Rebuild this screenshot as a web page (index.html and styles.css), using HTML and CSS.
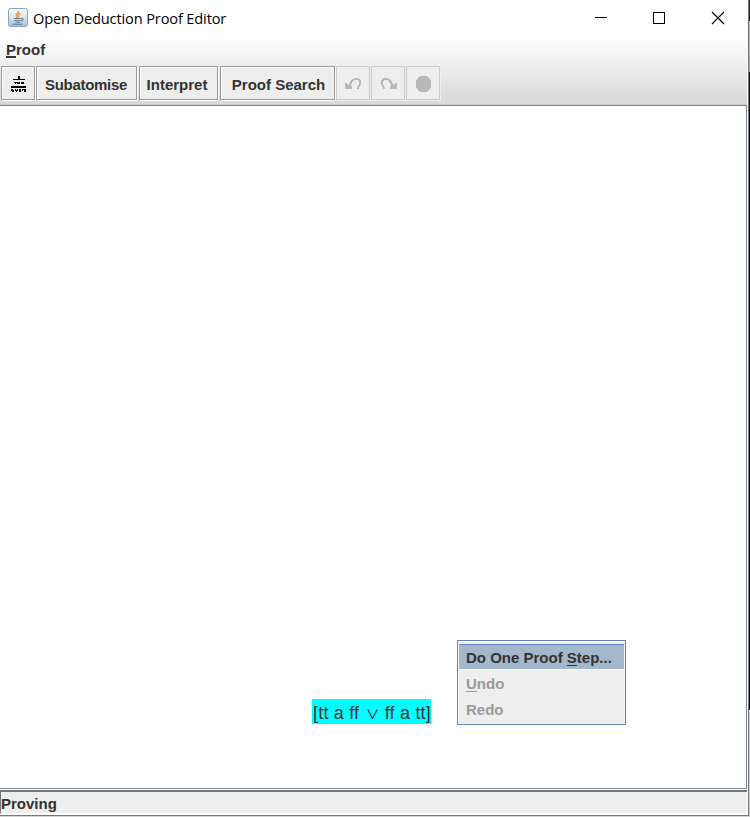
FILE: index.html
```html
<!DOCTYPE html>
<html lang="en">
<head>
<meta charset="utf-8">
<title>Open Deduction Proof Editor</title>
<link rel="stylesheet" href="styles.css">
</head>
<body>
<div class="screen">
<div class="window">
  <header class="titlebar">
    <svg class="app-icon" width="20" height="20" viewBox="0 0 20 20">
      <defs><linearGradient id="g" x1="0" y1="0" x2="0" y2="1"><stop offset="0" stop-color="#f8fafb"/><stop offset=".5" stop-color="#dde5eb"/><stop offset="1" stop-color="#a9bdcc"/></linearGradient></defs>
      <rect x=".5" y=".5" width="19" height="18" rx="2" fill="url(#g)" stroke="#8ba3b5"/>
      <path d="M10.5 3c1 2-3 3-2 5 .4 1 1.300 1.300 1 2M12.500 5.500c-2 1-2.500 2-1.500 3.500" fill="none" stroke="#ed9140" stroke-width="1.500"/>
      <path d="M6 10.500h7.500M6.500 12.500h6M7.500 14.300h4.500M4.500 16.300h10M13.500 10.500c2.500-.5 2 2-.5 2.500" fill="none" stroke="#557d9e" stroke-width="1.100"/>
    </svg>
    <span class="title">Open Deduction Proof Editor</span>
    <svg class="controls" width="132" height="14" viewBox="0 0 132 14" fill="none" stroke="#000" shape-rendering="crispEdges">
      <path d="M0 6.500h12M58.500 1.500h11v11h-11z"/>
      <path d="M117 1l12 12M129 1l-12 12" shape-rendering="auto" stroke-width="1.100"/>
    </svg>
  </header>
  <div class="chrome">
    <nav class="menubar"><span class="menu"><span class="key">P</span>roof</span></nav>
    <div class="toolbar">
      <button class="tool icon">
        <svg width="16" height="16" viewBox="0 0 16 16" shape-rendering="crispEdges" fill="#000">
          <path d="M7 0h2v3H7zM2 3h12v1H2zM3 6h3v1H3zM4 7h1v1H4zM6 6h3v2H6zM10 6h3v2h-3zM0 10h15v2H0zM0 13h2v2H0zM1 14h2v2H1zM4 13h1v2H4zM5 14h1v2H5zM6 13h1v2H6zM8 13h2v3H8zM11 13h1v2h-1zM12 13h3v1h-3zM13 14h2v2h-2z"/>
        </svg>
      </button>
      <button class="tool subatomise"><span>Subatomise</span></button>
      <button class="tool interpret"><span>Interpret</span></button>
      <button class="tool search"><span>Proof Search</span></button>
      <button class="tool icon off" disabled>
        <svg class="undo" width="16" height="12" viewBox="0 0 16 12" shape-rendering="crispEdges"><path d="M0 5h2v1h1v1h1V5h1V3h1V2h1V1h2V0h5v1h1v1h1v5h-1v2h-1v2h-2V9h1V7h1V3h-1V2H9v1H8v1H7v2H6v2h1v3H0z"/></svg>
      </button>
      <button class="tool icon off" disabled>
        <svg class="redo" width="16" height="12" viewBox="0 0 16 12" shape-rendering="crispEdges"><path d="M0 5h2v1h1v1h1V5h1V3h1V2h1V1h2V0h5v1h1v1h1v5h-1v2h-1v2h-2V9h1V7h1V3h-1V2H9v1H8v1H7v2H6v2h1v3H0z"/></svg>
      </button>
      <button class="tool icon off" disabled>
        <svg width="16" height="16" viewBox="0 0 16 16" shape-rendering="crispEdges"><path d="M4 0h7v1h2v2h1v1h1v8h-1v1h-1v2h-2v1H4v-1H2v-2H1v-1H0V4h1V3h1V1h2z"/></svg>
      </button>
    </div>
  </div>
  <main class="canvas">
    <div class="formula"><span>[tt a ff <svg width="11" height="10" viewBox="0 0 11 10"><path d="M.8 .5l4.700 9 4.700-9" fill="none" stroke="#333" stroke-width="1.200"/></svg> ff a tt]</span></div>
    <div class="popup">
      <div class="item active"><span>Do One Proof <span class="key">S</span>tep...</span></div>
      <div class="item"><span><span class="key">U</span>ndo</span></div>
      <div class="item"><span>Redo</span></div>
    </div>
  </main>
  <footer class="status">Proving</footer>
</div>
<div class="edge"></div>
</div>
</body>
</html>
```
FILE: styles.css
```css
* { box-sizing: border-box; }
body { margin: 0; background: #fff; overflow: hidden; font: bold 15px "Liberation Sans", Arial, sans-serif; color: #333; }
.screen { display: flex; width: 750px; height: 817px; background: #d4d4d4; }
.window { display: flex; flex-direction: column; width: 749px; height: 816px; background: #fff; border-right: 1px solid #777; border-bottom: 1px solid #777; }
.edge { width: 1px; background: linear-gradient(#222 21px, #aaa 21px 72px, #111 72px 710px, #c8c8c8 710px); }
.titlebar { display: flex; align-items: center; height: 37px; padding: 0 21px 0 8px; }
.app-icon { margin-top: -2px; }
.title { margin: -2px 0 0 5px; font: 14.6px/20px "Open Sans", "Noto Sans", sans-serif; letter-spacing: -.14px; color: #000; white-space: nowrap; }
.controls { margin-left: auto; margin-top: -1px; }
.chrome { height: 68px; background: linear-gradient(#fff, #dadada 62px); border-bottom: 1px solid #ccc; margin-right: 1px; }
.menubar { height: 29px; padding: 3px 0 0 6px; line-height: 20px; }
.key { display: inline-block; height: 16px; line-height: 16px; border-bottom: 1px solid currentColor; }
.menu .key { border-bottom-width: 2px; }
.toolbar { display: flex; gap: 1px; padding-left: 1px; }
.tool { display: flex; align-items: center; justify-content: center; height: 34px; padding: 3px 0 0; border: 1px solid #999; background: #eee; box-shadow: inset 1px 1px #fff, 1px 1px #fff; font: inherit; color: #333; white-space: nowrap; }
.icon { width: 34px; padding: 2px 0 0 2px; }
.subatomise { width: 101px; padding-right: 1px; margin-right: 1px; letter-spacing: -.3px; }
.interpret { width: 79px; padding-right: 3px; margin-right: 1px; }
.search { width: 115px; padding-left: 2px; }
.off { border-color: #ccc; box-shadow: 1px 1px #eee; }
.off svg { fill: #b8b8b8; }
.undo { margin-right: 2px; }
.redo { transform: scaleX(-1); }
.canvas { position: relative; height: 684px; margin-right: 1px; border: solid #7a8a99; border-width: 1px 1px 1px 0; background: #fff; }
.formula { position: absolute; left: 312px; top: 593px; width: 119px; height: 25px; padding-left: 1px; background: #0ff; font-weight: normal; font-size: 18px; letter-spacing: .2px; line-height: 28px; white-space: pre; }
.formula svg { margin: 0 2px 0 2px; }
.popup { position: absolute; left: 457px; top: 534px; width: 169px; height: 85px; padding: 3px 1px 0 1px; border: 1px solid #6382bf; background: #eee; box-shadow: inset 1px 1px #fff; }
.item { height: 26px; padding: 4px 0 0 7px; line-height: 20px; color: #999; white-space: nowrap; }
.item.active { padding-top: 3px; background: #a3b8cc; border-top: 1px solid #6382bf; border-bottom: 1px solid #fff; color: #333; }
.status { height: 24px; margin: 1px 1px 1px 0; padding: 1px 0 0; border: solid #777; border-width: 2px 0 0 1px; border-bottom: 1px solid #fff; background: #eee; line-height: 22px; }
```
